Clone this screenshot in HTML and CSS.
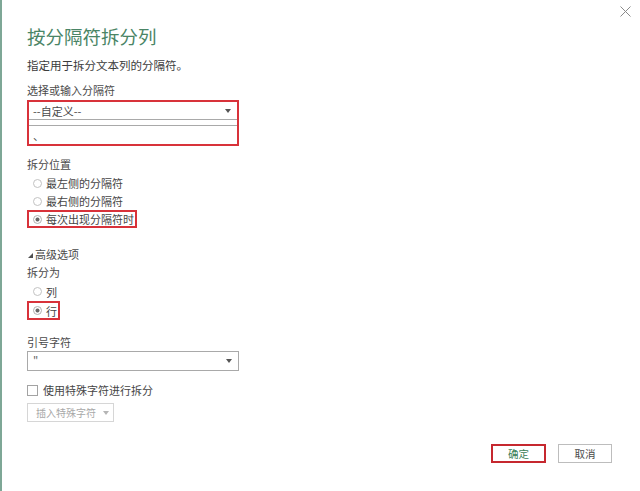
FILE: index.html
```html
<!DOCTYPE html>
<html lang="zh-CN">
<head>
<meta charset="UTF-8">
<meta name="viewport" content="width=device-width, initial-scale=1.0">
<title>按分隔符拆分列</title>
<link rel="stylesheet" href="styles.css">
</head>
<body>
<div class="dialog">
  <div class="topbar">
    <button class="close" aria-label="关闭">
      <svg width="11" height="11" viewBox="0 0 11 11"><path d="M0.5 0.5L10.5 10.5M10.5 0.5L0.5 10.5" stroke="#8a8a8a" stroke-width="1" fill="none"/></svg>
    </button>
  </div>
  <h1 class="title">按分隔符拆分列</h1>
  <p class="desc">指定用于拆分文本列的分隔符。</p>

  <div class="label label-first">选择或输入分隔符</div>
  <div class="combo">
    <div class="combo-select"><span>--自定义--</span><span class="caret"></span></div>
    <div class="combo-input">、</div>
  </div>

  <div class="label label-section">拆分位置</div>
  <div class="radios">
    <label class="radio"><span class="dot"></span>最左侧的分隔符</label>
    <label class="radio"><span class="dot"></span>最右侧的分隔符</label>
    <label class="radio marked"><span class="dot checked"></span>每次出现分隔符时</label>
  </div>

  <div class="advanced"><span class="tri"></span>高级选项</div>
  <div class="label label-tight">拆分为</div>
  <div class="radios radios-tall">
    <label class="radio"><span class="dot"></span>列</label>
    <label class="radio marked"><span class="dot checked"></span>行</label>
  </div>

  <div class="label label-quote">引号字符</div>
  <div class="dropdown"><span>"</span><span class="caret"></span></div>

  <label class="check-row"><span class="checkbox"></span>使用特殊字符进行拆分</label>
  <button class="insert-btn" disabled>插入特殊字符<span class="caret caret-light"></span></button>

  <div class="footer">
    <button class="btn btn-ok">确定</button>
    <button class="btn">取消</button>
  </div>
</div>
</body>
</html>
```

FILE: styles.css
```css
* {
  box-sizing: border-box;
}
body {
  margin: 0;
  background: #fff;
  font-family: "Noto Sans CJK SC", "Microsoft YaHei", sans-serif;
  color: #4a4a4a;
}
button {
  font-family: inherit;
}
.dialog {
  height: 100vh;
  border-left: 2px solid #7ea796;
  padding-left: 25px;
  display: flex;
  flex-direction: column;
  align-items: flex-start;
}
.topbar {
  align-self: stretch;
  height: 24px;
  display: flex;
  justify-content: flex-end;
  align-items: flex-start;
  padding: 6px 9px 0 0;
}
.close {
  border: 0;
  background: none;
  padding: 0;
  width: 11px;
  height: 11px;
  display: block;
}
.close svg {
  display: block;
}
.title {
  margin: 0;
  font-size: 18.5px;
  line-height: 24px;
  font-weight: normal;
  color: #4a8566;
}
.desc {
  margin: 9px 0 0;
  font-size: 11.5px;
  line-height: 16px;
  color: #3c3c3c;
}
.label {
  font-size: 11px;
  line-height: 16px;
  color: #4a4a4a;
}
.label-first {
  margin-top: 9px;
}
.label-section {
  margin-top: 10px;
}
.label-tight {
  margin-top: 2px;
}
.label-quote {
  margin-top: 14px;
}

/* delimiter combo, highlighted */
.combo {
  margin-top: 2px;
  width: 212px;
  border: 2px solid #d8323a;
}
.combo-select {
  height: 18px;
  border-bottom: 1px solid #a9a9a9;
  display: flex;
  align-items: center;
  justify-content: space-between;
  padding: 0 6px 0 4px;
  font-size: 11px;
  color: #4a4a4a;
}
.combo-input {
  margin-top: 5px;
  height: 19px;
  border-top: 1px solid #a9a9a9;
  padding: 0 4px;
  font-size: 11px;
  line-height: 18px;
  color: #4a4a4a;
}
.caret {
  width: 0;
  height: 0;
  border-left: 3.5px solid transparent;
  border-right: 3.5px solid transparent;
  border-top: 4px solid #555;
}
.caret-light {
  border-top-color: #b5b5b5;
  margin-left: 7px;
}

/* radio groups */
.radios {
  margin-top: 2px;
  display: flex;
  flex-direction: column;
  align-items: flex-start;
}
.radio {
  height: 18px;
  display: flex;
  align-items: center;
  border: 2px solid transparent;
  padding: 0 1px 0 4px;
  font-size: 11px;
  color: #454545;
}
.radios-tall .radio {
  height: 19px;
}
.radio.marked {
  border-color: #d8323a;
}
.dot {
  width: 9px;
  height: 9px;
  border: 1px solid #c2c2c2;
  border-radius: 50%;
  margin-right: 4px;
  background: #fff;
}
.dot.checked {
  border-color: #b0b0b0;
  background: radial-gradient(circle, #666 0, #666 1.6px, #fff 2.4px);
}
.advanced {
  margin-top: 18px;
  display: flex;
  align-items: center;
  font-size: 11px;
  line-height: 16px;
  color: #4a4a4a;
}
.tri {
  width: 0;
  height: 0;
  border-left: 5px solid transparent;
  border-bottom: 5px solid #505050;
  margin: 3px 2px 0 1px;
}

/* quote dropdown */
.dropdown {
  margin-top: 1px;
  width: 212px;
  height: 20px;
  border: 1px solid #a9a9a9;
  display: flex;
  align-items: center;
  justify-content: space-between;
  padding: 0 6px 0 5px;
  font-size: 11px;
  color: #666;
}
.check-row {
  margin-top: 10px;
  height: 18px;
  display: flex;
  align-items: center;
  font-size: 11px;
  color: #454545;
}
.checkbox {
  width: 11px;
  height: 11px;
  border: 1px solid #a3a3a3;
  background: #fff;
  margin-right: 5px;
}
.insert-btn {
  margin-top: 4px;
  width: 87px;
  height: 19px;
  border: 1px solid #d6d6d6;
  background: #fff;
  display: flex;
  align-items: center;
  padding: 0 0 0 8px;
  white-space: nowrap;
  font-size: 10px;
  color: #a8a8a8;
}

/* footer buttons */
.footer {
  align-self: stretch;
  margin-top: 22px;
  display: flex;
  justify-content: flex-end;
  gap: 12px;
  padding-right: 28px;
}
.btn {
  width: 54px;
  height: 19px;
  border: 1px solid #bdbdbd;
  background: #fff;
  padding: 0;
  font-size: 10.5px;
  color: #4a4a4a;
}
.btn-ok {
  width: 55px;
  border: 2px solid #c6282f;
  color: #3a8057;
}
```
